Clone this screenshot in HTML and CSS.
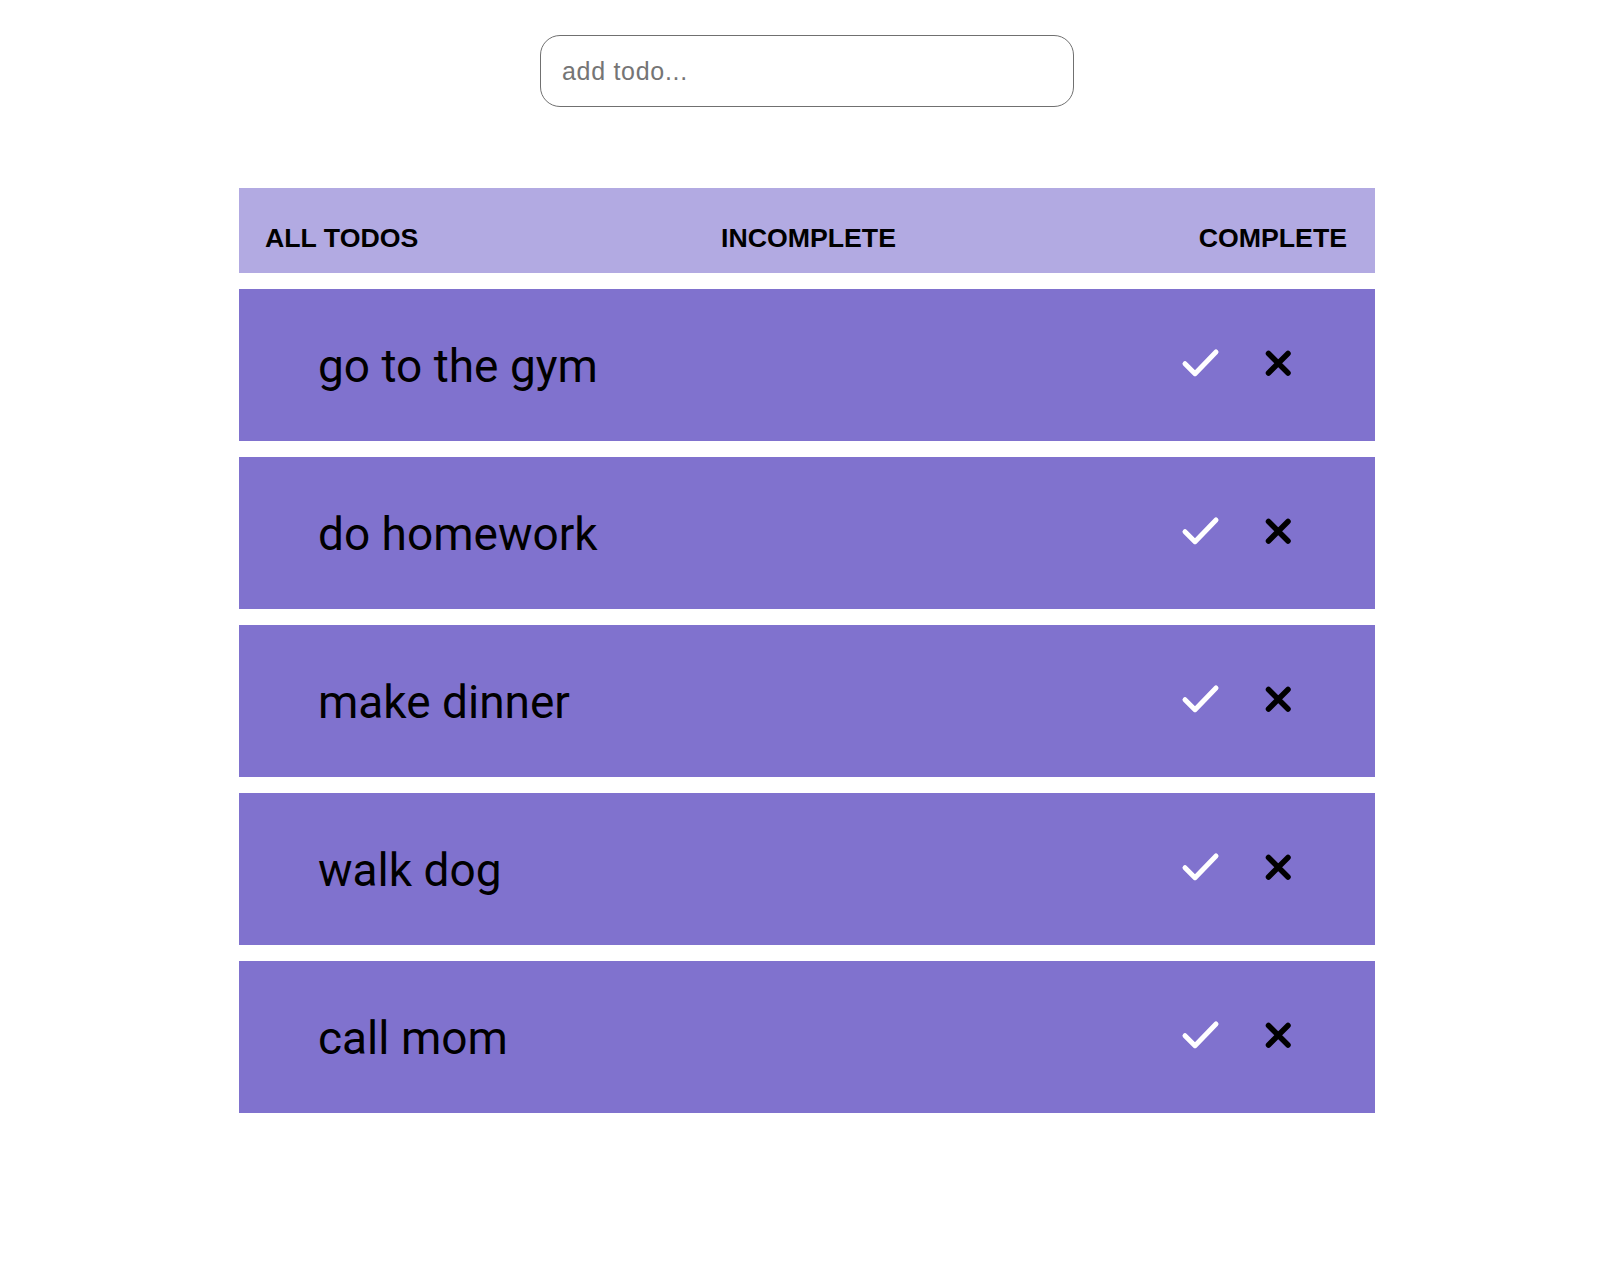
FILE: index.html
```html
<!DOCTYPE html>
<html lang="en">
<head>
<meta charset="utf-8">
<title>Todos</title>
<link rel="stylesheet" href="styles.css">
</head>
<body>
<div class="app">
  <input class="add-input" type="text" placeholder="add todo...">
  <div class="list">
    <div class="tabs">
      <span class="tab">ALL TODOS</span>
      <span class="tab">INCOMPLETE</span>
      <span class="tab">COMPLETE</span>
    </div>
    <div class="todo">
      <span class="todo-text">go to the gym</span>
      <div class="actions">
        <svg class="icon-check" width="40" height="32" viewBox="0 0 40 32"><polyline points="4,15.7 14,25.7 35,4" /></svg>
        <svg class="icon-x" width="30" height="30" viewBox="0 0 30 30"><path d="M5.5 4.5 L25 24 M25 4.5 L5.5 24" /></svg>
      </div>
    </div>
    <div class="todo">
      <span class="todo-text">do homework</span>
      <div class="actions">
        <svg class="icon-check" width="40" height="32" viewBox="0 0 40 32"><polyline points="4,15.7 14,25.7 35,4" /></svg>
        <svg class="icon-x" width="30" height="30" viewBox="0 0 30 30"><path d="M5.5 4.5 L25 24 M25 4.5 L5.5 24" /></svg>
      </div>
    </div>
    <div class="todo">
      <span class="todo-text">make dinner</span>
      <div class="actions">
        <svg class="icon-check" width="40" height="32" viewBox="0 0 40 32"><polyline points="4,15.7 14,25.7 35,4" /></svg>
        <svg class="icon-x" width="30" height="30" viewBox="0 0 30 30"><path d="M5.5 4.5 L25 24 M25 4.5 L5.5 24" /></svg>
      </div>
    </div>
    <div class="todo">
      <span class="todo-text">walk dog</span>
      <div class="actions">
        <svg class="icon-check" width="40" height="32" viewBox="0 0 40 32"><polyline points="4,15.7 14,25.7 35,4" /></svg>
        <svg class="icon-x" width="30" height="30" viewBox="0 0 30 30"><path d="M5.5 4.5 L25 24 M25 4.5 L5.5 24" /></svg>
      </div>
    </div>
    <div class="todo">
      <span class="todo-text">call mom</span>
      <div class="actions">
        <svg class="icon-check" width="40" height="32" viewBox="0 0 40 32"><polyline points="4,15.7 14,25.7 35,4" /></svg>
        <svg class="icon-x" width="30" height="30" viewBox="0 0 30 30"><path d="M5.5 4.5 L25 24 M25 4.5 L5.5 24" /></svg>
      </div>
    </div>
  </div>
</div>
</body>
</html>
```

FILE: styles.css
```css
html, body {
  background: #ffffff;
}

body {
  margin: 0;
  padding: 35px 0 0 9px;
  font-family: "Liberation Sans", Arial, sans-serif;
}

.app {
  display: flex;
  flex-direction: column;
  align-items: center;
}

.add-input {
  box-sizing: border-box;
  width: 534px;
  height: 72px;
  margin: 0;
  padding: 0 20px 0 21px;
  border: 1px solid #707070;
  border-radius: 20px;
  background: #ffffff;
  font-family: "Liberation Sans", Arial, sans-serif;
  font-size: 25px;
  letter-spacing: 0.7px;
  color: #000;
  outline: none;
}

.add-input::placeholder {
  color: #757575;
  opacity: 1;
}

.list {
  width: 1136px;
  margin-top: 81px;
  display: flex;
  flex-direction: column;
  gap: 16px;
}

.tabs {
  box-sizing: border-box;
  height: 85px;
  padding: 36px 28px 0 26px;
  background: #b2aae2;
  display: flex;
  justify-content: space-between;
  align-items: flex-start;
}

.tab {
  font-family: "Liberation Sans", Arial, sans-serif;
  font-weight: bold;
  font-size: 26.7px;
  line-height: 29px;
  color: #000;
}

.todo {
  box-sizing: border-box;
  height: 152px;
  padding: 0 82px 0 79px;
  background: #8072ce;
  display: flex;
  align-items: center;
  justify-content: space-between;
}

.todo-text {
  font-family: Roboto, "Liberation Sans", sans-serif;
  font-size: 46px;
  color: #000;
  margin-top: 2px;
}

.actions {
  display: flex;
  align-items: center;
  gap: 42px;
}

.actions svg {
  display: block;
  fill: none;
  stroke-linecap: round;
  stroke-linejoin: round;
}

.icon-check {
  stroke: #ffffff;
  stroke-width: 5;
  margin-top: -2px;
}

.icon-x {
  stroke: #000000;
  stroke-width: 5.5;
  margin-top: -2px;
}
```
